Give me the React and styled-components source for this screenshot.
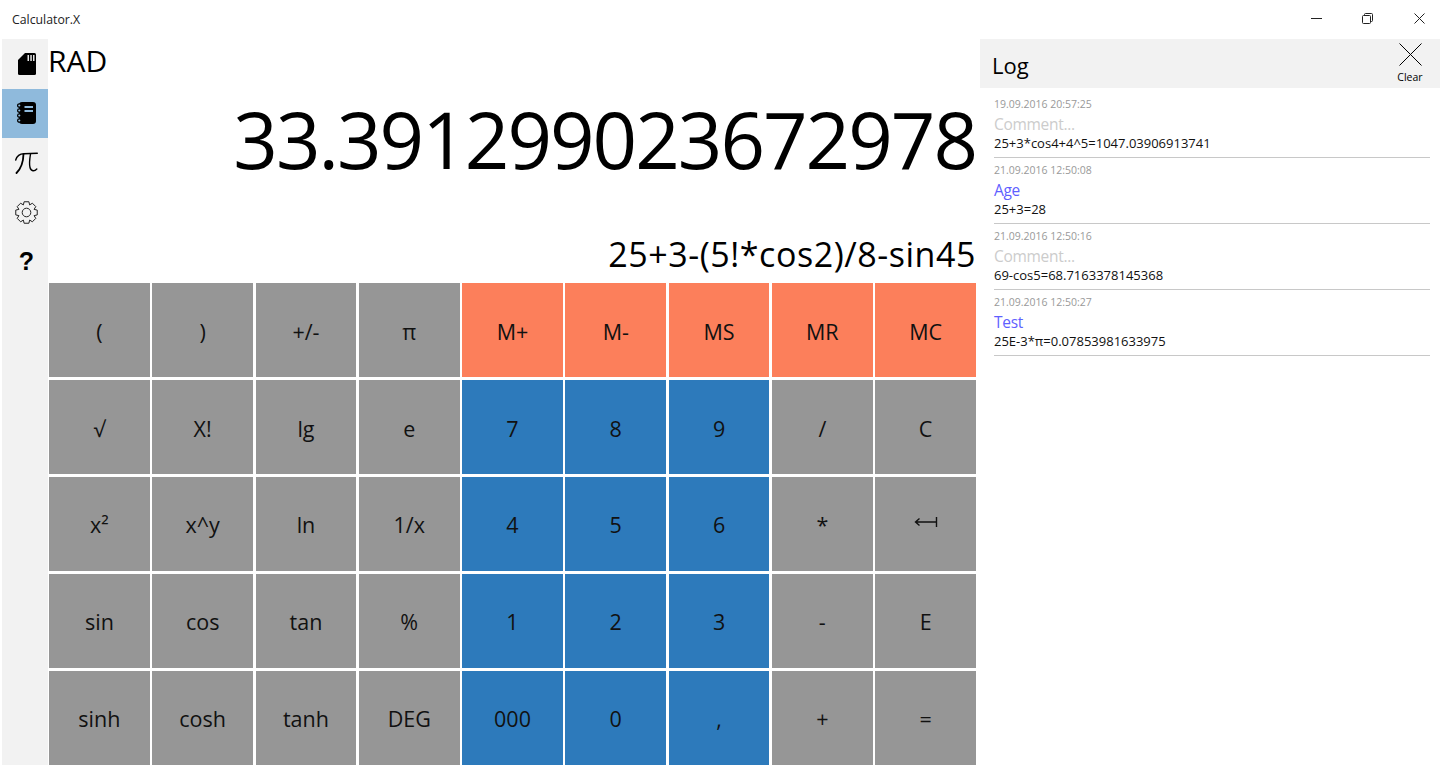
import React from 'react';
import styled, { createGlobalStyle } from 'styled-components';

const GlobalStyle = createGlobalStyle`
  html, body {
    margin: 0;
    padding: 0;
    background: #fff;
    overflow: hidden;
  }
  body {
    font-family: "Open Sans", "Noto Sans", "Liberation Sans", sans-serif;
    color: #000;
  }
`;

const Window = styled.div`
  width: 1440px;
  height: 767px;
  display: flex;
  flex-direction: column;
`;

const TitleBar = styled.header`
  height: 39px;
  flex: none;
  display: flex;
  align-items: center;
  justify-content: space-between;
`;

const AppName = styled.span`
  margin-left: 12px;
  font-size: 12.3px;
  color: #222;
`;

const WindowButtons = styled.div`
  display: flex;
  height: 100%;
`;

const WindowButton = styled.div`
  width: 51.5px;
  display: flex;
  align-items: center;
  padding: 0 0 3px 25px;
  box-sizing: border-box;
`;

const Main = styled.div`
  flex: 1;
  min-height: 0;
  display: flex;
`;

const Sidebar = styled.nav`
  width: 46px;
  margin-left: 2px;
  margin-bottom: 2px;
  flex: none;
  background: #f2f2f2;
  display: flex;
  flex-direction: column;
`;

const NavItem = styled.div`
  height: 49.5px;
  padding-left: 3px;
  box-sizing: border-box;
  display: flex;
  align-items: center;
  justify-content: center;
  background: ${(p) => (p.$active ? '#8fbadc' : 'transparent')};
`;

const HelpGlyph = styled.span`
  font-family: "Liberation Sans", sans-serif;
  font-weight: 700;
  font-size: 25px;
  line-height: 1;
`;

const Center = styled.section`
  width: 927px;
  margin-left: 1px;
  flex: none;
  display: flex;
  flex-direction: column;
`;

const Mode = styled.div`
  height: 44px;
  font-size: 30px;
  line-height: 44px;
  margin-left: -1px;
`;

const Result = styled.div`
  height: 112px;
  text-align: right;
  font-size: 78px;
  letter-spacing: -2px;
  line-height: 112px;
  white-space: nowrap;
`;

const Expression = styled.div`
  height: 88px;
  display: flex;
  align-items: flex-end;
  justify-content: flex-end;
  font-size: 34px;
  letter-spacing: 0.55px;
  line-height: 46px;
  padding-bottom: 6px;
  box-sizing: border-box;
`;

const Keypad = styled.div`
  flex: 1;
  margin-bottom: 2px;
  display: grid;
  grid-template-columns: repeat(9, 1fr);
  grid-template-rows: repeat(5, 1fr);
  gap: 2.5px;
`;

const keyColors = {
  gray: '#969696',
  orange: '#fc7f5b',
  blue: '#2d7abb',
};

const Key = styled.div`
  background: ${(p) => keyColors[p.$kind]};
  display: flex;
  align-items: center;
  justify-content: center;
  padding-top: 2px;
  box-sizing: border-box;
  font-size: 21.5px;
  color: #111;
`;

const BackspaceSvg = styled.svg`
  margin-bottom: 6px;
`;

const LogPanel = styled.aside`
  margin-left: 4px;
  flex: 1;
  display: flex;
  flex-direction: column;
`;

const LogHeader = styled.div`
  height: 49px;
  flex: none;
  background: #f2f2f2;
  display: flex;
  align-items: flex-start;
  justify-content: space-between;
  padding: 0 17px 0 12px;
`;

const LogTitle = styled.h2`
  margin: 11px 0 0;
  font-size: 22px;
  line-height: 30px;
  font-weight: 400;
`;

const ClearButton = styled.div`
  width: 26px;
  display: flex;
  flex-direction: column;
  align-items: center;
  gap: 4px;
  font-size: 10.5px;
  line-height: 14px;
  padding-top: 4px;
`;

const LogList = styled.div`
  padding: 4px 10px 0 14px;
`;

const Entry = styled.div`
  height: 66px;
  box-sizing: border-box;
  border-bottom: 1px solid #c8c8c8;
  padding-top: 5px;
`;

const EntryTime = styled.div`
  font-size: 10.5px;
  line-height: 15px;
  color: #999;
`;

const EntryComment = styled.div`
  font-size: 15.5px;
  letter-spacing: -0.3px;
  line-height: 22px;
  padding-top: 1px;
  color: ${(p) => (p.$empty ? '#ccc' : '#5f5fff')};
`;

const EntryFormula = styled.div`
  font-size: 13px;
  line-height: 16px;
  color: #111;
`;

const SdCardIcon = () => (
  <svg width="18" height="22" viewBox="0 0 18 22">
    <path d="M7 0h9.500a1.500 1.500 0 0 1 1.500 1.500v19a1.500 1.500 0 0 1-1.500 1.500H1.500A1.500 1.500 0 0 1 0 20.500V7z" fill="#000" />
    <path d="M9.500 2h1.500v6H9.500zM12.300 2h1.500v6h-1.500zM15 2h1.500v6H15z" fill="#e6e6e6" />
  </svg>
);

const NotebookIcon = () => (
  <svg width="19" height="22" viewBox="0 0 19 22">
    <rect x="2" y="0" width="17" height="22" rx="3" fill="#000" />
    <path d="M7.500 4h8.500v2H7.500zM7.500 8h8.500v2H7.500z" fill="#8fbadc" />
    <g fill="#8fbadc" stroke="#000" strokeWidth="1.2">
      <circle cx="2.300" cy="3.500" r="1.700" />
      <circle cx="2.300" cy="8.500" r="1.700" />
      <circle cx="2.300" cy="13.500" r="1.700" />
      <circle cx="2.300" cy="18.500" r="1.700" />
    </g>
  </svg>
);

const PiIcon = () => (
  <svg width="23" height="22" viewBox="0 0 23 22" fill="none" stroke="#000" strokeLinecap="round">
    <path d="M0.700 8C2 3.500 5 1.700 9 1.700L22.300 1.200" strokeWidth="1.400" />
    <path d="M8.500 2C8.300 10 5.500 17 1.500 21" strokeWidth="1.800" />
    <path d="M15.500 2C14.500 8 14 12 15 15.500C16 19.500 19.500 19.500 21.800 17" strokeWidth="1.400" />
  </svg>
);

// eight toothed gear outline, as the settings glyph has
function gearPath(teeth, outer, inner, cx, cy) {
  const points = [];
  const step = (Math.PI * 2) / teeth;
  for (let i = 0; i < teeth; i += 1) {
    const a = i * step - Math.PI / 2;
    [[inner, -0.5], [outer, -0.28], [outer, 0.28], [inner, 0.5]].forEach(([r, k]) => {
      const angle = a + k * step;
      points.push(`${(cx + r * Math.cos(angle)).toFixed(2)} ${(cy + r * Math.sin(angle)).toFixed(2)}`);
    });
  }
  return `M${points.join('L')}Z`;
}

const GearIcon = () => (
  <svg width="23" height="23" viewBox="0 0 23 23" fill="none" stroke="#222" strokeWidth="1" strokeLinejoin="round">
    <path d={gearPath(8, 11, 8.2, 11.5, 11.5)} />
    <circle cx="11.500" cy="11.500" r="4.300" />
  </svg>
);

const MinimizeIcon = () => (
  <svg width="11" height="11" viewBox="0 0 11 11">
    <path d="M0 5.500h11" stroke="#222" strokeWidth="1" />
  </svg>
);

const RestoreIcon = () => (
  <svg width="11" height="11" viewBox="0 0 11 11" fill="none" stroke="#222">
    <rect x="0.500" y="2.500" width="8" height="8" rx="1" />
    <path d="M2.500 2.500v-1a1 1 0 0 1 1-1h6a1 1 0 0 1 1 1v6a1 1 0 0 1-1 1h-1" />
  </svg>
);

const CloseIcon = ({ size = 11, stroke = '#222' }) => (
  <svg width={size} height={size} viewBox={`0 0 ${size} ${size}`}>
    <path d={`M0.500 0.500L${size - 0.5} ${size - 0.5}M${size - 0.5} 0.500L0.500 ${size - 0.5}`} stroke={stroke} strokeWidth="1" fill="none" />
  </svg>
);

const BackspaceIcon = () => (
  <BackspaceSvg width="24" height="12" viewBox="0 0 24 12" fill="none" stroke="#111" strokeWidth="1.400">
    <path d="M22.500 1v10M22 6H1.500M5.500 2.500L1.500 6L5.500 9.500" />
  </BackspaceSvg>
);

const keys = [
  [['(', 'gray'], [')', 'gray'], ['+/-', 'gray'], ['π', 'gray'], ['M+', 'orange'], ['M-', 'orange'], ['MS', 'orange'], ['MR', 'orange'], ['MC', 'orange']],
  [['√', 'gray'], ['X!', 'gray'], ['lg', 'gray'], ['e', 'gray'], ['7', 'blue'], ['8', 'blue'], ['9', 'blue'], ['/', 'gray'], ['C', 'gray']],
  [['x²', 'gray'], ['x^y', 'gray'], ['ln', 'gray'], ['1/x', 'gray'], ['4', 'blue'], ['5', 'blue'], ['6', 'blue'], ['*', 'gray'], [<BackspaceIcon />, 'gray']],
  [['sin', 'gray'], ['cos', 'gray'], ['tan', 'gray'], ['%', 'gray'], ['1', 'blue'], ['2', 'blue'], ['3', 'blue'], ['-', 'gray'], ['E', 'gray']],
  [['sinh', 'gray'], ['cosh', 'gray'], ['tanh', 'gray'], ['DEG', 'gray'], ['000', 'blue'], ['0', 'blue'], [',', 'blue'], ['+', 'gray'], ['=', 'gray']],
];

const entries = [
  { time: '19.09.2016 20:57:25', formula: '25+3*cos4+4^5=1047.03906913741' },
  { time: '21.09.2016 12:50:08', comment: 'Age', formula: '25+3=28' },
  { time: '21.09.2016 12:50:16', formula: '69-cos5=68.7163378145368' },
  { time: '21.09.2016 12:50:27', comment: 'Test', formula: '25E-3*π=0.07853981633975' },
];

function App() {
  return (
    <Window>
      <GlobalStyle />
      <TitleBar>
        <AppName>Calculator.X</AppName>
        <WindowButtons>
          <WindowButton><MinimizeIcon /></WindowButton>
          <WindowButton><RestoreIcon /></WindowButton>
          <WindowButton><CloseIcon /></WindowButton>
        </WindowButtons>
      </TitleBar>
      <Main>
        <Sidebar>
          <NavItem><SdCardIcon /></NavItem>
          <NavItem $active><NotebookIcon /></NavItem>
          <NavItem><PiIcon /></NavItem>
          <NavItem><GearIcon /></NavItem>
          <NavItem><HelpGlyph>?</HelpGlyph></NavItem>
        </Sidebar>
        <Center>
          <Mode>RAD</Mode>
          <Result>33.391299023672978</Result>
          <Expression>25+3-(5!*cos2)/8-sin45</Expression>
          <Keypad>
            {keys.flat().map(([label, kind], index) => (
              <Key key={index} $kind={kind}>{label}</Key>
            ))}
          </Keypad>
        </Center>
        <LogPanel>
          <LogHeader>
            <LogTitle>Log</LogTitle>
            <ClearButton>
              <CloseIcon size={23} stroke="#000" />
              Clear
            </ClearButton>
          </LogHeader>
          <LogList>
            {entries.map((entry) => (
              <Entry key={entry.time}>
                <EntryTime>{entry.time}</EntryTime>
                <EntryComment $empty={!entry.comment}>{entry.comment || 'Comment...'}</EntryComment>
                <EntryFormula>{entry.formula}</EntryFormula>
              </Entry>
            ))}
          </LogList>
        </LogPanel>
      </Main>
    </Window>
  );
}

export default App;
